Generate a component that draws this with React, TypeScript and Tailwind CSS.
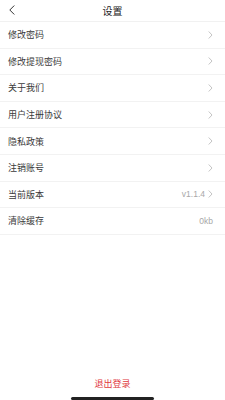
import React from "react";

const rows: { label: string; value?: string; arrow: boolean }[] = [
  { label: "修改密码", arrow: true },
  { label: "修改提现密码", arrow: true },
  { label: "关于我们", arrow: true },
  { label: "用户注册协议", arrow: true },
  { label: "隐私政策", arrow: true },
  { label: "注销账号", arrow: true },
  { label: "当前版本", value: "v1.1.4", arrow: true },
  { label: "清除缓存", value: "0kb", arrow: false },
];

function Chevron() {
  return (
    <svg width="5" height="8" viewBox="0 0 5 8" fill="none" className="ml-[3px]">
      <path d="M1 0.8 L4 4 L1 7.2" stroke="#b5b5b5" strokeWidth="0.8" strokeLinecap="round" strokeLinejoin="round" />
    </svg>
  );
}

export default function App() {
  return (
    <div
      className="w-[225px] h-[400px] bg-white flex flex-col overflow-hidden"
      style={{ fontFamily: '"Noto Sans CJK SC", "Noto Sans", sans-serif' }}
    >
      <div className="h-[22px] flex items-center relative border-b border-[#f1f1f1]">
        <svg width="8" height="10" viewBox="0 0 8 10" fill="none" className="absolute left-[8px] top-[5px]">
          <path d="M6 0.8 L1.8 5 L6 9.2" stroke="#333" strokeWidth="1" strokeLinecap="round" strokeLinejoin="round" />
        </svg>
        <div className="flex-1 text-center text-[10px] text-[#222] leading-none">设置</div>
      </div>
      {rows.map((r) => (
        <div
          key={r.label}
          className="h-[26.6px] flex items-center pl-[8px] pr-[12px] border-b border-[#f2f2f2] shrink-0"
        >
          <div className="flex-1 text-[9px] text-[#3a3a3a] leading-none">{r.label}</div>
          {r.value && (
            <div className="text-[8.5px] text-[#a8a8a8] leading-none" style={{ fontFamily: '"Liberation Sans", sans-serif' }}>
              {r.value}
            </div>
          )}
          {r.arrow && <Chevron />}
        </div>
      ))}
      <div className="flex-1" />
      <div className="flex justify-center pb-[8px]">
        <div className="text-[9px] text-[#e0393e] leading-none">退出登录</div>
      </div>
      <div className="flex justify-center h-[4px] items-end">
        <div className="w-[83px] h-[3px] rounded-full bg-[#222]" />
      </div>
    </div>
  );
}
